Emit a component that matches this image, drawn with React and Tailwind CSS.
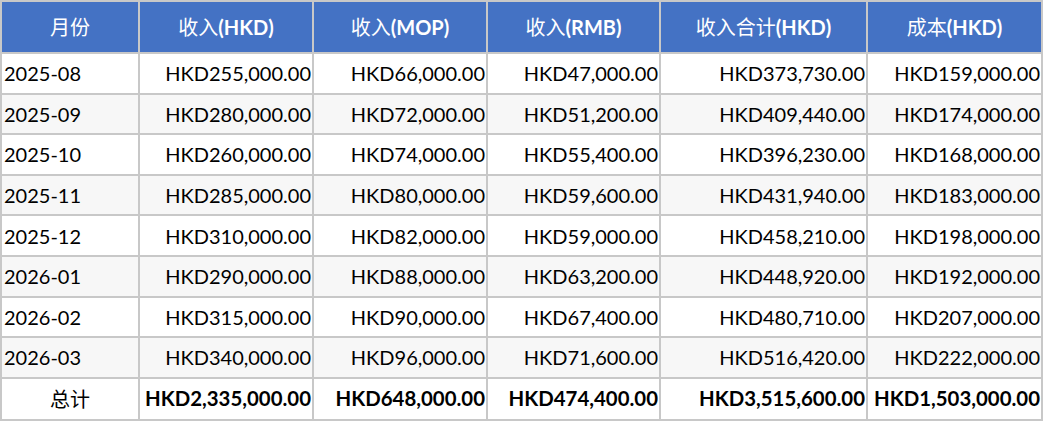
const rows = [
  ["2025-08", "HKD255,000.00", "HKD66,000.00", "HKD47,000.00", "HKD373,730.00", "HKD159,000.00"],
  ["2025-09", "HKD280,000.00", "HKD72,000.00", "HKD51,200.00", "HKD409,440.00", "HKD174,000.00"],
  ["2025-10", "HKD260,000.00", "HKD74,000.00", "HKD55,400.00", "HKD396,230.00", "HKD168,000.00"],
  ["2025-11", "HKD285,000.00", "HKD80,000.00", "HKD59,600.00", "HKD431,940.00", "HKD183,000.00"],
  ["2025-12", "HKD310,000.00", "HKD82,000.00", "HKD59,000.00", "HKD458,210.00", "HKD198,000.00"],
  ["2026-01", "HKD290,000.00", "HKD88,000.00", "HKD63,200.00", "HKD448,920.00", "HKD192,000.00"],
  ["2026-02", "HKD315,000.00", "HKD90,000.00", "HKD67,400.00", "HKD480,710.00", "HKD207,000.00"],
  ["2026-03", "HKD340,000.00", "HKD96,000.00", "HKD71,600.00", "HKD516,420.00", "HKD222,000.00"],
];

// [chinese label, latin suffix]
const headers = [
  ["月份", ""],
  ["收入", "(HKD)"],
  ["收入", "(MOP)"],
  ["收入", "(RMB)"],
  ["收入合计", "(HKD)"],
  ["成本", "(HKD)"],
];
const totals = ["HKD2,335,000.00", "HKD648,000.00", "HKD474,400.00", "HKD3,515,600.00", "HKD1,503,000.00"];

export default function App() {
  return (
    <div className="bg-white w-[1043px] h-[424px] overflow-hidden" style={{ fontFamily: 'Lato, "Noto Sans CJK SC", sans-serif' }}>
      <table className="table-fixed border-collapse w-[1041px] text-[20px] text-black">
        <colgroup>
          <col className="w-[138px]" />
          <col className="w-[174px]" />
          <col className="w-[174px]" />
          <col className="w-[173px]" />
          <col className="w-[207px]" />
          <col className="w-[175px]" />
        </colgroup>
        <thead>
          <tr className="h-[52px] bg-[#4472c4] text-white">
            {headers.map(([zh, en]) => (
              <th key={zh + en} className="border-2 border-[#c8c8c8] font-normal text-center px-1 whitespace-nowrap">
                {zh}
                {en && <span className="font-bold">{en}</span>}
              </th>
            ))}
          </tr>
        </thead>
        <tbody>
          {rows.map((r, i) => (
            <tr key={r[0]} className={`h-[40.6px] ${i % 2 === 1 ? "bg-[#f7f7f7]" : "bg-white"}`}>
              <td className="border-2 border-[#c8c8c8] text-left pl-[2px] whitespace-nowrap">{r[0]}</td>
              {r.slice(1).map((v, j) => (
                <td key={j} className="border-2 border-[#c8c8c8] text-right pr-[1px] whitespace-nowrap">
                  {v}
                </td>
              ))}
            </tr>
          ))}
          <tr className="h-[42px] bg-white">
            <td className="border-2 border-[#c8c8c8] text-center">总计</td>
            {totals.map((v) => (
              <td key={v} className="border-2 border-[#c8c8c8] text-right pr-[1px] font-bold text-[20.4px] whitespace-nowrap">
                {v}
              </td>
            ))}
          </tr>
        </tbody>
      </table>
    </div>
  );
}
